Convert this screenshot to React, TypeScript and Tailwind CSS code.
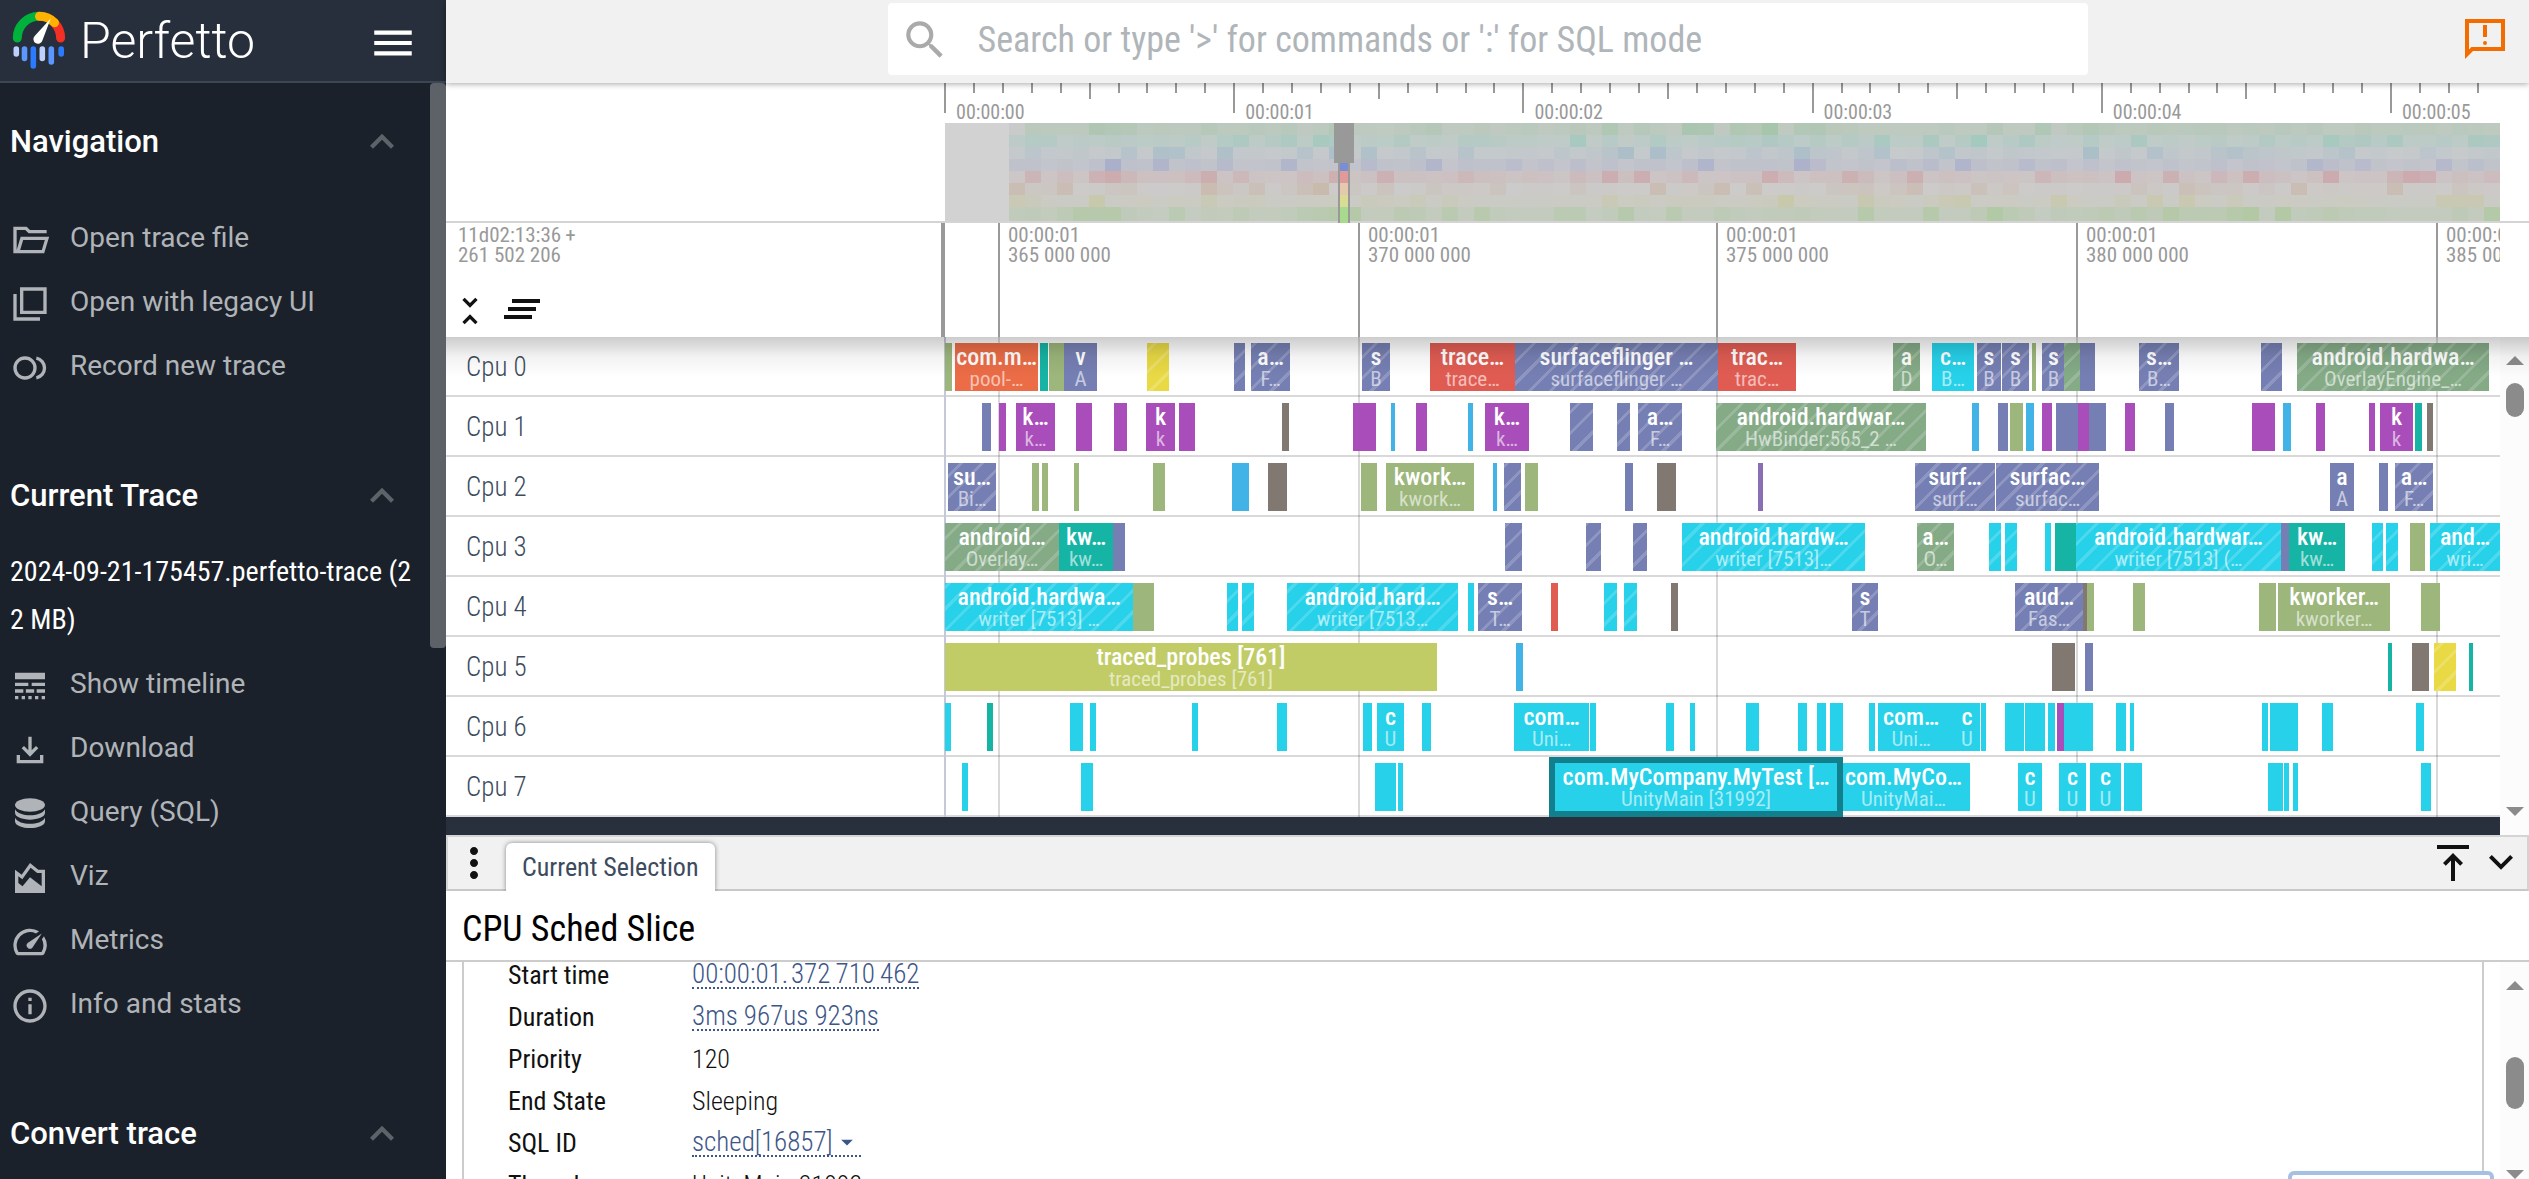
import React from "react";
import {
  MdMenu,
  MdSearch,
  MdLineStyle,
  MdOutlineSpeed,
  MdInfoOutline,
  MdUnfoldLess,
  MdClearAll,
  MdMoreVert,
  MdArrowDropDown,
} from "react-icons/md";

const SPAN = 1555;
const pct = (v: number) => `${(v / SPAN) * 100}%`;

const COLORS = {
  green: "bg-[#9cb67b]",
  orange: "bg-[#eb6c46]",
  teal: "bg-[#16b4a5]",
  indigo: "bg-[#767fb3]",
  yellow: "bg-[#e9d945]",
  red: "bg-[#e05c52]",
  sage: "bg-[#84aa86]",
  cyan: "bg-[#26d1e9]",
  purple: "bg-[#a84db9]",
  brown: "bg-[#827872]",
  blue: "bg-[#42b3e7]",
  violet: "bg-[#8a6fb5]",
  lime: "bg-[#c1cc66]",
};
type Color = keyof typeof COLORS;

// start, width, colour, hatched, title, subtitle
type Slice = [number, number, Color, (0 | 1)?, string?, string?];

const TRACKS: Slice[][] = [
  [
    [0, 7, "green"],
    [10, 83, "orange", 0, "com.m…", "pool-…"],
    [95, 8, "teal"],
    [104, 15, "green"],
    [119, 33, "indigo", 0, "v", "A"],
    [202, 22, "yellow", 1],
    [289, 11, "indigo", 1],
    [306, 39, "indigo", 1, "a…", "F…"],
    [417, 28, "indigo", 1, "s", "B"],
    [485, 85, "red", 0, "trace…", "trace…"],
    [570, 203, "indigo", 1, "surfaceflinger …", "surfaceflinger …"],
    [773, 78, "red", 0, "trac…", "trac…"],
    [948, 27, "sage", 1, "a", "D"],
    [987, 42, "cyan", 0, "c…", "B…"],
    [1032, 24, "indigo", 1, "s", "B"],
    [1057, 27, "indigo", 1, "s", "B"],
    [1087, 4, "green"],
    [1097, 23, "indigo", 1, "s", "B"],
    [1119, 16, "sage", 1],
    [1135, 15, "indigo"],
    [1194, 40, "indigo", 1, "s…", "B…"],
    [1316, 21, "indigo", 1],
    [1352, 192, "sage", 1, "android.hardwa…", "OverlayEngine_…"],
  ],
  [
    [37, 9, "indigo"],
    [54, 7, "purple"],
    [71, 39, "purple", 0, "k…", "k…"],
    [131, 16, "purple"],
    [169, 13, "purple"],
    [201, 29, "purple", 0, "k", "k"],
    [234, 16, "purple"],
    [337, 7, "brown"],
    [408, 23, "purple"],
    [446, 4, "blue"],
    [471, 11, "purple"],
    [523, 5, "blue"],
    [540, 44, "purple", 0, "k…", "k…"],
    [625, 23, "indigo", 1],
    [672, 13, "indigo", 1],
    [693, 44, "indigo", 1, "a…", "F…"],
    [771, 210, "sage", 1, "android.hardwar…", "HwBinder:565_2 …"],
    [1027, 7, "blue"],
    [1053, 10, "indigo"],
    [1065, 13, "green"],
    [1081, 8, "blue"],
    [1097, 10, "purple"],
    [1111, 22, "indigo"],
    [1133, 11, "purple"],
    [1144, 17, "indigo"],
    [1180, 10, "purple"],
    [1220, 9, "indigo"],
    [1307, 23, "purple"],
    [1338, 8, "blue"],
    [1371, 9, "purple"],
    [1424, 6, "purple"],
    [1435, 33, "purple", 0, "k", "k"],
    [1470, 7, "teal"],
    [1482, 6, "brown"],
  ],
  [
    [3, 48, "indigo", 1, "su…", "Bi…"],
    [87, 7, "green"],
    [97, 6, "green"],
    [129, 5, "green"],
    [208, 12, "green"],
    [287, 17, "blue"],
    [323, 19, "brown"],
    [416, 16, "green"],
    [441, 88, "green", 0, "kwork…", "kwork…"],
    [548, 4, "blue"],
    [559, 17, "indigo", 1],
    [580, 13, "green"],
    [680, 8, "indigo"],
    [712, 19, "brown"],
    [813, 5, "violet"],
    [970, 80, "indigo", 1, "surf…", "surf…"],
    [1051, 103, "indigo", 1, "surfac…", "surfac…"],
    [1385, 24, "indigo", 0, "a", "A"],
    [1434, 9, "indigo"],
    [1450, 38, "indigo", 1, "a…", "F…"],
  ],
  [
    [0, 114, "sage", 1, "android…", "Overlay…"],
    [114, 54, "teal", 0, "kw…", "kw…"],
    [168, 12, "indigo"],
    [560, 17, "indigo", 1],
    [641, 15, "indigo", 1],
    [688, 14, "indigo", 1],
    [737, 183, "cyan", 1, "android.hardw…", "writer [7513]…"],
    [972, 37, "sage", 1, "a…", "O…"],
    [1044, 12, "cyan", 1],
    [1060, 12, "cyan", 1],
    [1100, 6, "cyan"],
    [1110, 21, "teal"],
    [1131, 205, "cyan", 1, "android.hardwar…", "writer [7513] (…"],
    [1336, 8, "indigo"],
    [1344, 56, "teal", 0, "kw…", "kw…"],
    [1427, 11, "cyan", 1],
    [1441, 12, "cyan", 1],
    [1465, 15, "green"],
    [1485, 70, "cyan", 1, "and…", "wri…"],
  ],
  [
    [0, 188, "cyan", 1, "android.hardwa…", "writer [7513] …"],
    [188, 21, "green"],
    [282, 11, "cyan", 1],
    [297, 12, "cyan", 1],
    [342, 171, "cyan", 1, "android.hard…", "writer [7513…"],
    [523, 6, "cyan"],
    [533, 44, "indigo", 1, "s…", "T…"],
    [606, 7, "red"],
    [659, 13, "cyan", 1],
    [679, 13, "cyan", 1],
    [726, 7, "brown"],
    [907, 26, "indigo", 1, "s", "T"],
    [1070, 68, "indigo", 1, "aud…", "Fas…"],
    [1138, 4, "brown"],
    [1142, 7, "green"],
    [1188, 12, "green"],
    [1314, 17, "green"],
    [1333, 112, "green", 0, "kworker…", "kworker…"],
    [1476, 19, "green"],
  ],
  [
    [0, 492, "lime", 0, "traced_probes [761]", "traced_probes [761]"],
    [571, 7, "blue"],
    [1107, 23, "brown"],
    [1140, 8, "indigo"],
    [1443, 4, "teal"],
    [1467, 17, "brown"],
    [1489, 22, "yellow", 1],
    [1524, 4, "teal"],
  ],
  [
    [0, 6, "cyan"],
    [42, 6, "teal"],
    [125, 13, "cyan"],
    [145, 6, "cyan"],
    [247, 6, "cyan"],
    [332, 10, "cyan"],
    [418, 9, "cyan"],
    [432, 27, "cyan", 0, "c", "U"],
    [477, 9, "cyan"],
    [569, 75, "cyan", 0, "com…", "Uni…"],
    [645, 6, "cyan"],
    [721, 8, "cyan"],
    [745, 5, "cyan"],
    [801, 13, "cyan"],
    [853, 9, "cyan"],
    [872, 9, "cyan"],
    [885, 13, "cyan"],
    [924, 6, "cyan"],
    [933, 66, "cyan", 0, "com…", "Uni…"],
    [998, 12, "cyan"],
    [1009, 26, "cyan", 0, "c", "U"],
    [1036, 5, "cyan"],
    [1060, 19, "cyan"],
    [1080, 20, "cyan"],
    [1103, 7, "cyan"],
    [1112, 7, "purple"],
    [1119, 29, "cyan"],
    [1171, 10, "cyan"],
    [1185, 4, "cyan"],
    [1317, 6, "cyan"],
    [1325, 28, "cyan"],
    [1377, 11, "cyan"],
    [1471, 8, "cyan"],
  ],
  [
    [17, 6, "cyan"],
    [136, 12, "cyan"],
    [430, 21, "cyan"],
    [453, 5, "cyan"],
    [892, 133, "cyan", 0, "com.MyCo…", "UnityMai…"],
    [610, 282, "cyan", 0, "com.MyCompany.MyTest […", "UnityMain [31992]"],
    [1073, 24, "cyan", 0, "c", "U"],
    [1114, 27, "cyan", 0, "c", "U"],
    [1145, 31, "cyan", 0, "c", "U"],
    [1179, 18, "cyan"],
    [1323, 15, "cyan"],
    [1339, 5, "cyan"],
    [1348, 5, "cyan"],
    [1476, 10, "cyan"],
  ],
];

const GRID = [
  { at: 54, label: "365 000 000" },
  { at: 414, label: "370 000 000" },
  { at: 772, label: "375 000 000" },
  { at: 1132, label: "380 000 000" },
  { at: 1492, label: "385 000 000" },
];

const CONDENSED = "font-['Roboto_Condensed','Liberation_Sans_Narrow',Roboto,sans-serif]";

function SliceBox({ slice }: { slice: Slice }) {
  const [at, width, color, hatched, title, sub] = slice;
  const selected = title?.startsWith("com.MyCompany");
  return (
    <div
      className={`absolute top-[6px] h-12 overflow-hidden text-center whitespace-nowrap text-white ${COLORS[color]} ${
        selected ? "z-10 overflow-visible outline-6 outline-[#117f8c]" : ""
      }`}
      style={{ left: pct(at), width: pct(width) }}
    >
      {hatched ? (
        <div className="absolute inset-0 bg-[repeating-linear-gradient(-45deg,transparent_0_12px,#ffffff2e_12px_15px)]" />
      ) : null}
      {title && (
        <div className="relative flex flex-col items-center">
          <span className="text-[24px] leading-7 font-medium">{title}</span>
          <span className="text-[21px] leading-4 text-white/60">{sub}</span>
        </div>
      )}
    </div>
  );
}

function Track({ index, slices }: { index: number; slices: Slice[] }) {
  return (
    <div className="flex h-[60px] border-b-2 border-[#d9d9d9]">
      <div className="flex w-[499px] shrink-0 items-center pt-0.5 pl-5 text-[27px] font-light text-[#3c4b5d]">
        Cpu {index}
      </div>
      <div className="relative min-w-0 flex-1">
        <div className="absolute top-0 -bottom-0.5 -left-px w-0.5 bg-[#c3c9d8]" />
        {GRID.map((g) => (
          <div key={g.at} className="absolute top-0 -bottom-0.5 w-0.5 bg-black/15" style={{ left: pct(g.at - 1) }} />
        ))}
        {slices.map((s, i) => (
          <SliceBox key={i} slice={s} />
        ))}
      </div>
    </div>
  );
}

const HEAT = [
  [162, 196, 168],
  [158, 200, 188],
  [160, 186, 200],
  [164, 170, 202],
  [204, 160, 164],
  [200, 176, 158],
  [198, 198, 156],
  [174, 200, 158],
];
const HEAT_BIAS = [0.4, 0.35, 0.22, 0.3, 0.25, 0.12, 0.2, 0.35];

function noise(r: number, c: number) {
  const v = Math.sin(r * 127.1 + c * 311.7) * 43758.5453;
  return v - Math.floor(v);
}

function Overview() {
  const columns = 93;
  return (
    <div className="relative h-[98px] bg-[#d2d2d2]">
      <div className="ml-[4.1%] flex h-full flex-col">
        {HEAT.map((rgb, r) => (
          <div key={r} className={`flex ${r === 7 ? "flex-1" : "h-3"}`}>
            {Array.from({ length: columns }, (_, c) => {
              const n = noise(r + 1, c + 1);
              const k = Math.min(1, HEAT_BIAS[r] * (c ? 1 : 0.4) + n ** 5 * 0.45 + (n - 0.5) * 0.18);
              const [R, G, B] = rgb.map((v) => Math.round(204 + (v - 204) * Math.max(0, k)));
              return <div key={c} className="flex-1" style={{ backgroundColor: `rgb(${R},${G},${B})` }} />;
            })}
          </div>
        ))}
      </div>
      <div
        className="absolute top-9 -bottom-0.5 flex flex-col border-x-2 border-[#999]"
        style={{ left: pct(393), width: pct(12) }}
      >
        <div className="h-3 bg-[#788fd5]" />
        <div className="h-3 bg-[#e09a9a]" />
        <div className="h-3 bg-[#e5c9ae]" />
        <div className="h-3 bg-[#d8dc94]" />
        <div className="flex-1 bg-[#a9d98c]" />
      </div>
      <div className="absolute top-0 h-10 bg-[#999]" style={{ left: pct(389), width: pct(20) }} />
    </div>
  );
}

function TimeRuler() {
  const second = 289.2;
  return (
    <div className="relative h-10">
      {Array.from({ length: 54 }, (_, i) => {
        const size = i % 10 === 0 ? "h-[30px]" : i % 5 === 0 ? "h-4" : "h-2.5";
        return (
          <div key={i} className={`absolute top-0 w-0.5 bg-[#999] ${size}`} style={{ left: pct((i * second) / 10 - 1) }} />
        );
      })}
      {[0, 1, 2, 3, 4, 5].map((s) => (
        <div
          key={s}
          className="absolute top-[17px] pl-3 text-[20px] leading-6 text-[#999]"
          style={{ left: pct(s * second - 1) }}
        >
          00:00:0{s}
        </div>
      ))}
    </div>
  );
}

function Glyph({ d, className }: { d: string; className?: string }) {
  return (
    <svg viewBox="0 0 24 24" className={className} fill="currentColor" fillRule="evenodd">
      <path d={d} />
    </svg>
  );
}

type IconType = React.ComponentType<{ className?: string }>;

const FolderIcon: IconType = (p) => (
  <Glyph {...p} d="M2 20V4h8l2 2h10v2H11.175l-2-2H4v12l2.400-8h17.100l-3 10zM6.100 18h13l1.800-6H7.900z" />
);
const StackIcon: IconType = (p) => <Glyph {...p} d="M22 18H6V2h16zM8 16h12V4H8zM18 22H2V6h2v14h14z" />;
const DownloadIcon: IconType = (p) => (
  <Glyph
    {...p}
    d="M12 16l-5-5 1.400-1.450 2.600 2.600V4h2v8.150l2.600-2.600L17 11zM4 20v-5h2v3h12v-3h2v5z"
  />
);
const FeedbackIcon: IconType = (p) => (
  <Glyph
    {...p}
    d="M2 22V2h20v16H6zM4 17.200L5.200 16H20V4H4zM11 5h2v6h-2zM12 13a1 1 0 1 0 0 2a1 1 0 1 0 0-2z"
  />
);
const AlignTopIcon: IconType = (p) => (
  <Glyph {...p} d="M4 5V3h16v2zM11 21V10.800l-2.600 2.600L7 12l5-5 5 5-1.400 1.400L13 10.800V21z" />
);
const VizIcon: IconType = (p) => (
  <Glyph {...p} d="M3 7l4 3 5-7 5 4h4v14H3V7zm2 4v4l2.500 2L12 11.500l7 5.500V9h-2.700l-3.900-3.100L7.400 12.800z" />
);
const ChevronUp: IconType = (p) => <Glyph {...p} d="M12 7.900l6 6-1.500 1.500-4.500-4.500-4.500 4.500L6 13.900z" />;
const ChevronDown: IconType = (p) => <Glyph {...p} d="M12 15.400l-6-6 1.400-1.400 4.600 4.600 4.600-4.600L18 9.400z" />;

function RecordIcon({ className }: { className?: string }) {
  return (
    <svg viewBox="0 0 24 24" className={className} fill="none" stroke="currentColor" strokeWidth="2">
      <circle cx="9" cy="12" r="6" />
      <path d="M15.8 6.1a6 6 0 0 1 0 11.8" />
    </svg>
  );
}

function DatabaseIcon({ className }: { className?: string }) {
  return (
    <svg viewBox="0 0 24 24" className={className} fill="currentColor">
      <ellipse cx="12" cy="6.6" rx="9" ry="4.1" />
      <path d="M3 9.2c1.3 2.6 5.2 3.6 9 3.6s7.700-1 9-3.600v2.100c0 2.600-4.500 4.100-9 4.100s-9-1.500-9-4.100z" />
      <path d="M3 14.200c1.300 2.600 5.200 3.600 9 3.600s7.700-1 9-3.600v2.100c0 2.600-4.500 4.100-9 4.100s-9-1.500-9-4.100z" />
    </svg>
  );
}

function Logo() {
  return (
    <svg viewBox="12 12 54 59" className="h-[59px] w-[54px]" fill="none">
      <g strokeWidth="9" strokeLinecap="round">
        <path d="M54.500 24a21.700 21.700 0 0 1 6.100 15" stroke="#f23024" />
        <path d="M17.300 39A21.700 21.700 0 0 1 39 17.300" stroke="#00b13c" />
        <path d="M39.500 17.300a21.700 21.700 0 0 1 15 6.400" stroke="#ffb300" />
      </g>
      <path d="M50.700 19.500L42.400 41.500A4.600 4.600 0 1 1 34.900 36.800Z" fill="#fff" />
      <g strokeWidth="5.600" strokeLinecap="round">
        <path d="M16.300 50v5M42.300 50v9.500" stroke="#bcd0fb" />
        <path d="M24.500 50v9.500M51.300 50v13" stroke="#5c97ff" />
        <path d="M33.300 50v17M61.200 50v5" stroke="#2b7bff" />
      </g>
    </svg>
  );
}

function Section({ title, children }: { title: string; children?: React.ReactNode }) {
  return (
    <section>
      <button className="flex h-16 w-full items-center justify-between pr-10 pl-2.5 text-[31px] font-medium text-white">
        {title}
        <ChevronUp className="-mr-4 size-12 text-[#5d6369]" />
      </button>
      {children}
    </section>
  );
}

function NavItem({ icon: Icon, label }: { icon: IconType; label: string }) {
  return (
    <a href="#" className="flex h-16 items-center gap-5 pl-2.5 text-[28px] text-[#b0b4b8]">
      <Icon className="relative top-0.5 size-10 shrink-0" />
      {label}
    </a>
  );
}

function Sidebar() {
  return (
    <aside className="flex w-[446px] shrink-0 flex-col overflow-hidden bg-[#1b212a] font-[Roboto,sans-serif]">
      <div className="flex h-[83px] shrink-0 items-center border-b-2 border-[#3d4652] bg-[#262f3b] pl-3">
        <Logo />
        <span className="ml-3.5 text-[50px] leading-none font-light text-white">Perfetto</span>
        <button aria-label="Toggle menu" className="mr-7 ml-auto pt-1 text-white">
          <MdMenu className="size-[50px]" />
        </button>
      </div>
      <div className="flex min-h-0 flex-1">
        <nav className="min-w-0 flex-1 pt-[27px]">
          <Section title="Navigation">
            <div className="mt-8">
              <NavItem icon={FolderIcon} label="Open trace file" />
              <NavItem icon={StackIcon} label="Open with legacy UI" />
              <NavItem icon={RecordIcon} label="Record new trace" />
            </div>
          </Section>
          <div className="h-[66px]" />
          <Section title="Current Trace">
            <p className={`mt-5 pl-2.5 text-[28px] leading-[48px] text-white ${CONDENSED}`}>
              2024-09-21-175457.perfetto-trace (2
              <br />2 MB)
            </p>
            <div className="mt-2">
              <NavItem icon={MdLineStyle} label="Show timeline" />
              <NavItem icon={DownloadIcon} label="Download" />
              <NavItem icon={DatabaseIcon} label="Query (SQL)" />
              <NavItem icon={VizIcon} label="Viz" />
              <NavItem icon={MdOutlineSpeed} label="Metrics" />
              <NavItem icon={MdInfoOutline} label="Info and stats" />
            </div>
          </Section>
          <div className="h-[66px]" />
          <Section title="Convert trace" />
        </nav>
        <div className="w-4">
          <div className="h-[565px] rounded bg-[#5d6269]" />
        </div>
      </div>
    </aside>
  );
}

function Arrow({ down = false }: { down?: boolean }) {
  return (
    <svg viewBox="0 0 18 9" className="h-[9px] w-[18px] shrink-0" fill="#8b8b8b">
      <path d={down ? "M0 0h18L9 9z" : "M0 9h18L9 0z"} />
    </svg>
  );
}

const DETAILS: { label: string; value: string; link?: boolean; menu?: boolean }[] = [
  { label: "Start time", value: "00:00:01.\u200a372\u2009710\u2009462", link: true },
  { label: "Duration", value: "3ms 967us 923ns", link: true },
  { label: "Priority", value: "120" },
  { label: "End State", value: "Sleeping" },
  { label: "SQL ID", value: "sched[16857]", link: true, menu: true },
  { label: "Thread", value: "UnityMain 31992" },
];

export default function App() {
  return (
    <div className={`flex h-screen overflow-hidden bg-white ${CONDENSED}`}>
      <Sidebar />
      <main className="flex min-w-0 flex-1 flex-col">
        <header className="relative z-20 flex h-[83px] shrink-0 items-start justify-center bg-[#f1f1f1] pt-[3px] shadow-[0_1px_6px_rgba(0,0,0,0.35)]">
          <label className="flex h-[72px] w-full max-w-[1200px] items-center rounded bg-white pt-0.5 pl-3">
            <MdSearch className="size-[50px] shrink-0 text-[#aaa]" />
            <input
              aria-label="Search"
              placeholder="Search or type '>' for commands or ':' for SQL mode"
              className="ml-7 min-w-0 flex-1 text-[36px] outline-none placeholder:text-[#b0b5b9]"
            />
          </label>
          <button aria-label="Report a problem" className="absolute top-[15px] right-5 text-[#f36c00]">
            <FeedbackIcon className="size-12" />
          </button>
        </header>

        <div className="flex h-[140px] shrink-0 border-b-2 border-[#d4d4d4] pr-[29px]">
          <div className="w-[499px] shrink-0" />
          <div className="min-w-0 flex-1">
            <TimeRuler />
            <Overview />
          </div>
        </div>

        <div className="flex h-[114px] shrink-0 pr-[29px] text-[21px] leading-5 text-[#999]">
          <div className="flex w-[499px] shrink-0 flex-col border-r-4 border-[#999] pt-0.5 pl-3">
            <div>11d02:13:36&#8201;+</div>
            <div>261 502 206</div>
            <div className="mt-6 -ml-2 flex gap-2 text-[#111]">
              <button aria-label="Collapse all">
                <MdUnfoldLess className="size-10" />
              </button>
              <button aria-label="Clear pinned tracks">
                <MdClearAll className="-mt-1 size-12" />
              </button>
            </div>
          </div>
          <div className="relative min-w-0 flex-1 overflow-hidden">
            {GRID.map((g) => (
              <div
                key={g.at}
                className="absolute inset-y-0 border-l-2 border-[#999] pt-0.5 pl-2 whitespace-nowrap"
                style={{ left: pct(g.at - 1) }}
              >
                00:00:01
                <br />
                {g.label}
              </div>
            ))}
          </div>
        </div>

        <div className="relative flex shrink-0">
          <div className="min-w-0 flex-1">
            {TRACKS.map((slices, i) => (
              <Track key={i} index={i} slices={slices} />
            ))}
            <div className="h-[18px] bg-[#28303d]" />
          </div>
          <div className="flex w-[29px] flex-col items-center bg-[#fcfcfc] pt-[19px] pb-[19px]">
            <Arrow />
            <div className="mt-[18px] mb-auto h-[34px] w-[18px] rounded-full bg-[#8b8b8b]" />
            <Arrow down />
          </div>
          <div className="pointer-events-none absolute inset-x-0 top-0 z-20 h-10 bg-linear-to-b from-black/20 via-black/5 to-transparent" />
        </div>

        <div className="flex h-14 shrink-0 items-center border-x-2 border-t-2 border-b-2 border-[#d4d4d4] border-b-[#c8c8c8] bg-[#f1f1f1] pr-0.5 pl-0.5">
          <button aria-label="Panel menu" className="text-[#111]">
            <MdMoreVert className="size-12" />
          </button>
          <button className="relative top-1 ml-2 h-12 rounded-t-md bg-white px-4 text-[26px] text-[#3c4b5d] shadow-[0_0_5px_rgba(0,0,0,0.45)] [clip-path:inset(-6px_-6px_0_-6px)]">
            Current Selection
          </button>
          <div className="ml-auto flex text-[#111]">
            <button aria-label="Maximize panel">
              <AlignTopIcon className="size-12" />
            </button>
            <button aria-label="Collapse panel">
              <ChevronDown className="size-12" />
            </button>
          </div>
        </div>

        <h1 className="flex h-[71px] shrink-0 items-center border-b-2 border-[#ccc] pt-1.5 pl-4 text-[36px] leading-none text-black">
          CPU Sched Slice
        </h1>
        <div className="relative flex min-h-0 flex-1 overflow-hidden">
          <div className="mr-4 ml-4 min-w-0 flex-1 border-x-2 border-[#ccc] pl-11">
            <table className="-mt-2 text-[26px] text-[#111]">
              <tbody>
                {DETAILS.map((d) => (
                  <tr key={d.label} className="h-[42px]">
                    <th scope="row" className="w-[184px] p-0 text-left leading-none font-normal">
                      {d.label}
                    </th>
                    <td className="p-0 leading-none font-light whitespace-nowrap">
                      {d.link ? (
                        <a
                          href="#"
                          className="inline-flex h-7 items-center border-b-2 border-dotted border-[#3d5688] text-[27px] text-[#3d5688]"
                        >
                          {d.value}
                          {d.menu && <MdArrowDropDown className="size-7" />}
                        </a>
                      ) : (
                        d.value
                      )}
                    </td>
                  </tr>
                ))}
              </tbody>
            </table>
          </div>
          <div className="flex w-[29px] shrink-0 flex-col items-center bg-[#fcfcfc] pt-[19px]">
            <Arrow />
            <div className="mt-[67px] mb-auto h-[52px] w-[18px] rounded-full bg-[#8b8b8b]" />
            <Arrow down />
          </div>
          <div className="absolute right-[35px] -bottom-6 h-8 w-[206px] rounded-md border-4 border-[#a5c0e2] bg-white" />
        </div>
      </main>
    </div>
  );
}
